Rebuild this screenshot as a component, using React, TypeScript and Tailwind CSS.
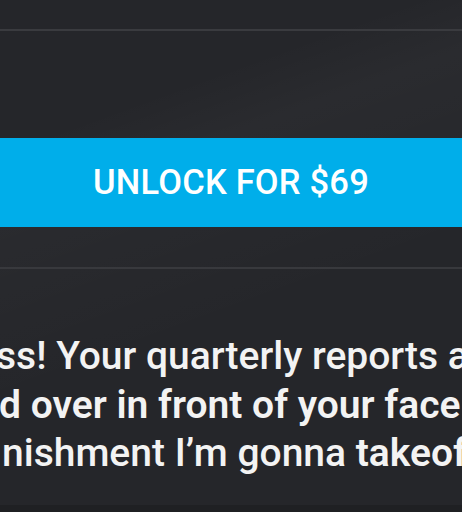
export default function App() {
  return (
    <div
      className="relative w-[462px] h-[512px] overflow-hidden bg-[#25262a] text-white"
      style={{ fontFamily: 'Roboto, "Liberation Sans", sans-serif' }}
    >
      {/* soft sheen behind the button */}
      <div className="pointer-events-none absolute inset-0 bg-[linear-gradient(160deg,transparent_22%,rgba(255,255,255,0.025)_32%,transparent_60%)]" />

      <div className="relative flex flex-col">
        <div className="h-[29px]" />
        <div className="h-[2px] bg-[#3a3b3f]" />
        <div className="h-[107px]" />

        <button className="h-[89px] w-full bg-[#00aeea] text-[34.5px] font-medium tracking-[0.2px] text-white">
          UNLOCK FOR $69
        </button>

        <div className="h-[40px]" />
        <div className="h-[2px] bg-[#38393d]" />

        {/* lyric lines, wider than the panel and clipped at the edges */}
        <div className="mt-[63px] flex flex-col text-[39px] leading-[48.5px] text-[#f3f3f3] whitespace-nowrap">
          <div className="-ml-[4px] font-medium">ss! Your quarterly reports are</div>
          <div className="-ml-[1px] font-semibold">d over in front of your face.</div>
          <div className="ml-[2px] font-medium">
            nishment I’m gonna <span className="font-semibold">takeoff</span>
          </div>
        </div>
      </div>

      <div className="absolute bottom-0 left-0 h-[7px] w-full bg-[#1f2023]" />
    </div>
  );
}
